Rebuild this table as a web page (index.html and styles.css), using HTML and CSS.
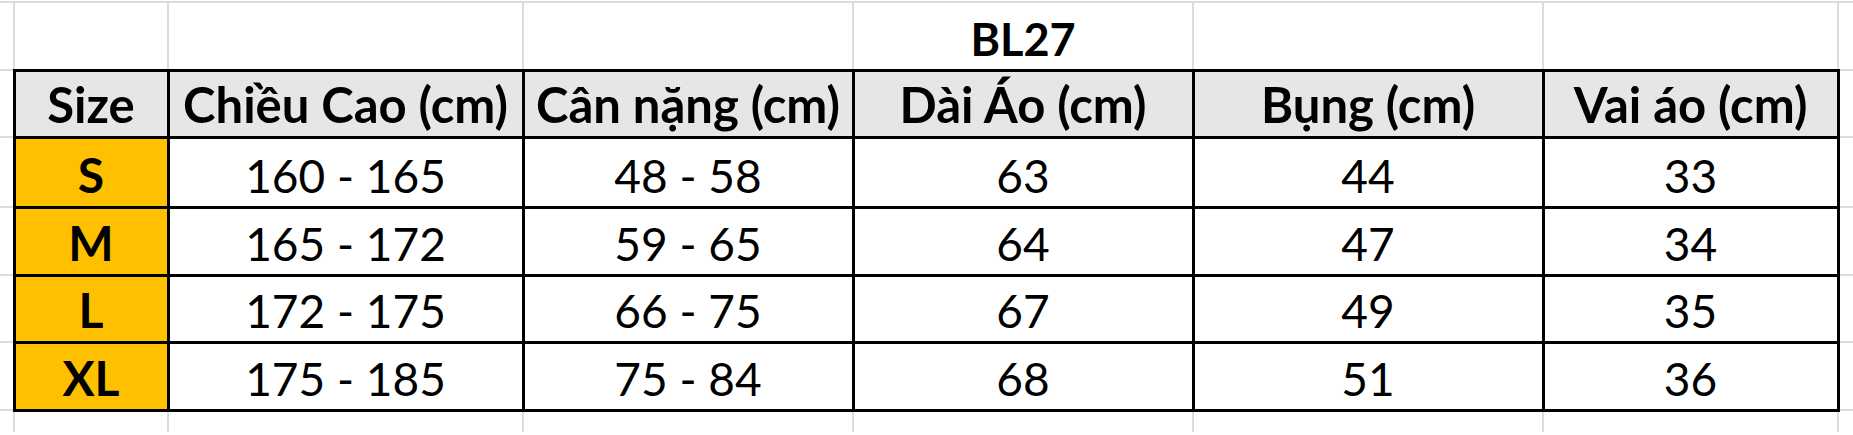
FILE: index.html
```html
<!DOCTYPE html>
<html lang="vi">
<head>
<meta charset="utf-8">
<title>BL27</title>
<link rel="stylesheet" href="styles.css">
</head>
<body>
<table class="sheet">
  <colgroup>
    <col class="c-edge">
    <col class="c-size">
    <col class="c-cao">
    <col class="c-can">
    <col class="c-dai">
    <col class="c-bung">
    <col class="c-vai">
    <col class="c-rest">
  </colgroup>
  <tr class="r-top">
    <td class="g"></td><td class="g"></td><td class="g"></td><td class="g"></td>
    <td class="g title">BL27</td>
    <td class="g"></td><td class="g"></td><td class="g"></td>
  </tr>
  <tr class="r-head">
    <td class="g"></td>
    <td class="t h">Size</td>
    <td class="t h">Chiều Cao (cm)</td>
    <td class="t h">Cân nặng (cm)</td>
    <td class="t h">Dài Áo (cm)</td>
    <td class="t h">Bụng (cm)</td>
    <td class="t h">Vai áo (cm)</td>
    <td class="g"></td>
  </tr>
  <tr class="r-s">
    <td class="g"></td>
    <td class="t sz">S</td>
    <td class="t">160 - 165</td>
    <td class="t">48 - 58</td>
    <td class="t">63</td>
    <td class="t">44</td>
    <td class="t">33</td>
    <td class="g"></td>
  </tr>
  <tr class="r-m">
    <td class="g"></td>
    <td class="t sz">M</td>
    <td class="t">165 - 172</td>
    <td class="t">59 - 65</td>
    <td class="t">64</td>
    <td class="t">47</td>
    <td class="t">34</td>
    <td class="g"></td>
  </tr>
  <tr class="r-l">
    <td class="g"></td>
    <td class="t sz">L</td>
    <td class="t">172 - 175</td>
    <td class="t">66 - 75</td>
    <td class="t">67</td>
    <td class="t">49</td>
    <td class="t">35</td>
    <td class="g"></td>
  </tr>
  <tr class="r-xl">
    <td class="g"></td>
    <td class="t sz">XL</td>
    <td class="t">175 - 185</td>
    <td class="t">75 - 84</td>
    <td class="t">68</td>
    <td class="t">51</td>
    <td class="t">36</td>
    <td class="g"></td>
  </tr>
  <tr class="r-bottom">
    <td class="g"></td><td class="g"></td><td class="g"></td><td class="g"></td>
    <td class="g"></td><td class="g"></td><td class="g"></td><td class="g"></td>
  </tr>
</table>
</body>
</html>
```

FILE: styles.css
```css
html, body {
  margin: 0;
  padding: 0;
  background: #ffffff;
  overflow: hidden;
}

body {
  width: 1853px;
  height: 435px;
}

.sheet {
  border-collapse: collapse;
  table-layout: fixed;
  width: 1853px;
  margin-top: 1px;
  font-family: Lato, "Liberation Sans", sans-serif;
  font-size: 46px;
  color: #000000;
}

.c-edge { width: 14px; }
.c-size { width: 154px; }
.c-cao { width: 355px; }
.c-can { width: 330px; }
.c-dai { width: 340px; }
.c-bung { width: 350px; }
.c-vai { width: 295px; }
.c-rest { width: 15px; }

.sheet td {
  padding: 0 0 7px 0;
  text-align: center;
  vertical-align: bottom;
  line-height: 1;
  white-space: nowrap;
  overflow: visible;
}

.g {
  border: 2px solid #dcdcdc;
}

.sheet td:first-child {
  border-left: none;
}

.sheet td:last-child {
  border-right: none;
}

.r-bottom .g {
  border-bottom: none;
}

.t {
  border: 3px solid #000000;
}

.h {
  background: #e7e6e6;
  font-weight: 700;
  font-size: 49px;
  padding-bottom: 6px;
}

.sz {
  background: #ffc000;
  font-weight: 700;
  font-size: 48px;
}

.title {
  font-weight: 700;
  font-size: 45px;
}

.r-top { height: 68px; }
.r-head { height: 67px; }
.r-s { height: 70px; }
.r-m { height: 68px; }
.r-l { height: 67px; }
.r-xl { height: 68px; }
.r-bottom { height: 22px; }
```
